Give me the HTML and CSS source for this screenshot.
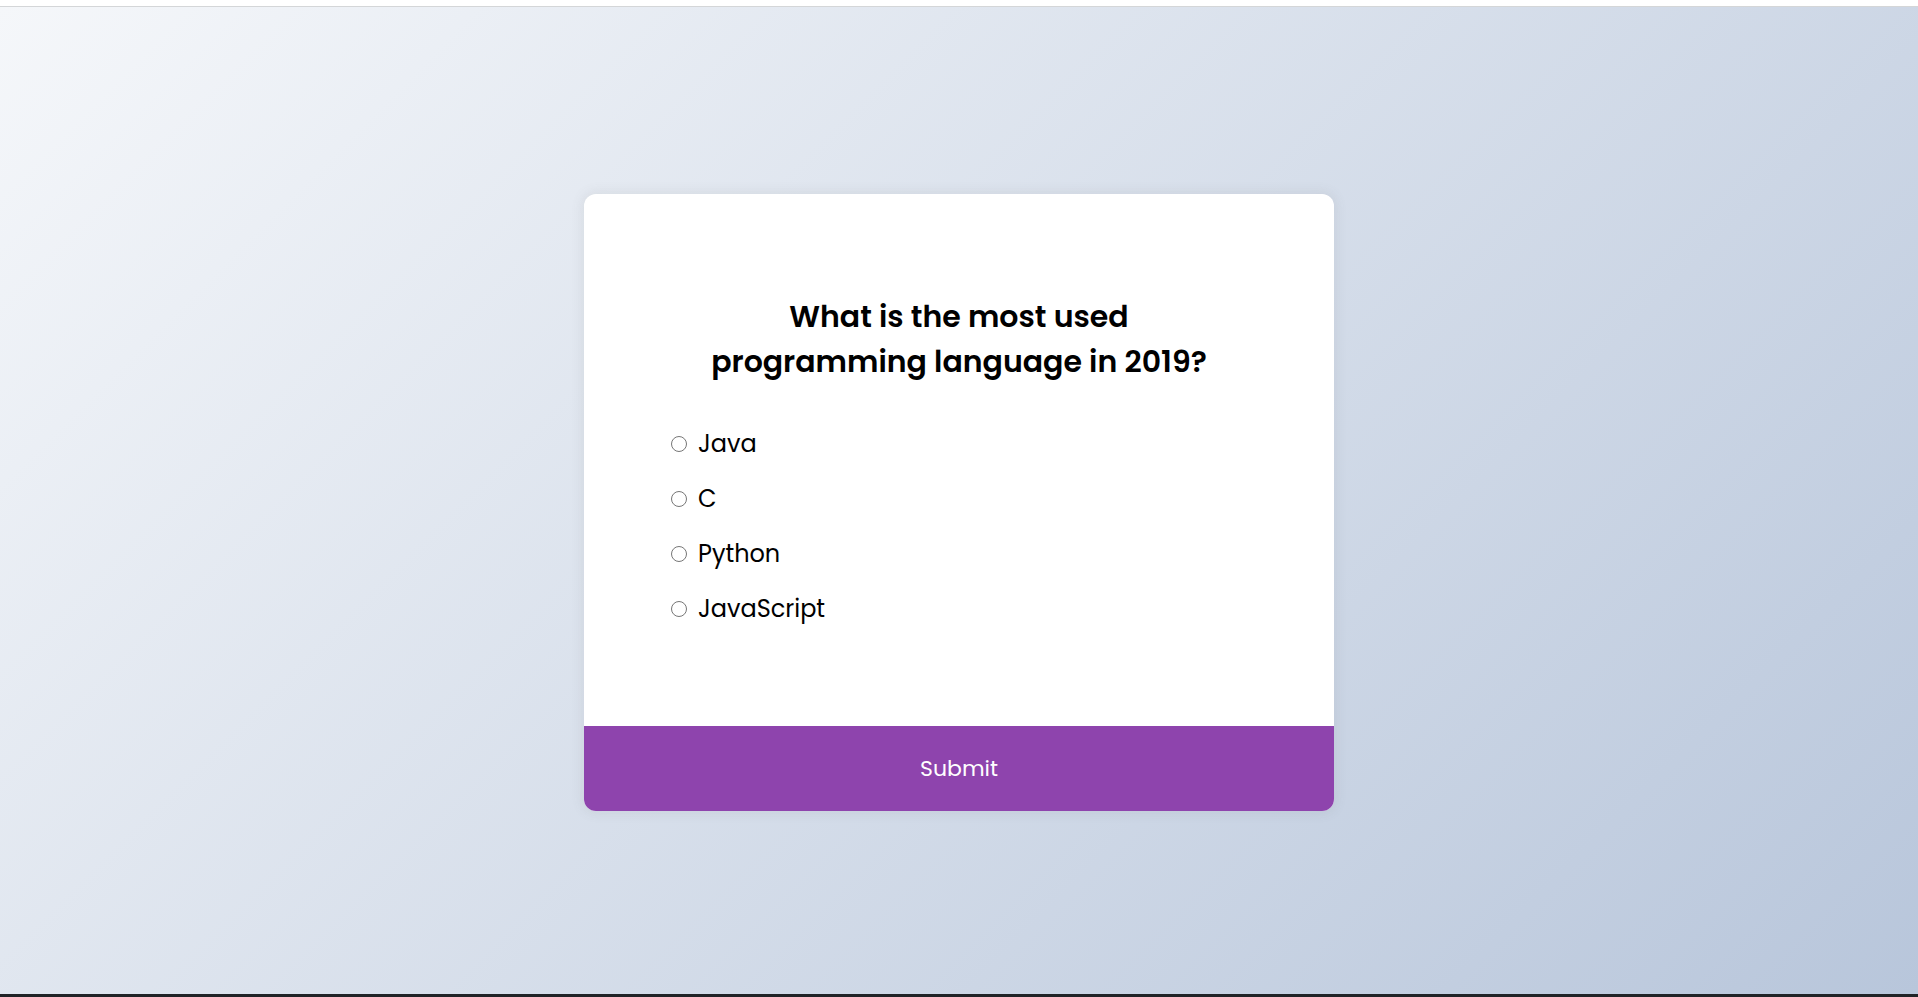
FILE: index.html
```html
<!DOCTYPE html>
<html lang="en">
<head>
<meta charset="UTF-8">
<title>Quiz App</title>
<link rel="stylesheet" href="styles.css">
</head>
<body>
<div class="topbar"></div>
<main class="stage">
  <div class="quiz-container">
    <div class="quiz-header">
      <h2 class="question">What is the most used programming language in 2019?</h2>
      <ul class="answers">
        <li class="answer-item">
          <input type="radio" name="answer" id="a" class="answer">
          <label for="a">Java</label>
        </li>
        <li class="answer-item">
          <input type="radio" name="answer" id="b" class="answer">
          <label for="b">C</label>
        </li>
        <li class="answer-item">
          <input type="radio" name="answer" id="c" class="answer">
          <label for="c">Python</label>
        </li>
        <li class="answer-item">
          <input type="radio" name="answer" id="d" class="answer">
          <label for="d">JavaScript</label>
        </li>
      </ul>
    </div>
    <button class="submit">Submit</button>
  </div>
</main>
<div class="bottombar"></div>
</body>
</html>
```

FILE: styles.css
```css
* { box-sizing: border-box; }

html, body { height: 100%; }

body {
  margin: 0;
  display: flex;
  flex-direction: column;
  overflow: hidden;
  font-family: "Poppins", "Liberation Sans", "Open Sans", sans-serif;
  color: #000;
}

.topbar {
  height: 7px;
  background: #fff;
  border-bottom: 1px solid #d4d6d8;
  flex: none;
}

.bottombar {
  height: 3px;
  background: #202327;
  flex: none;
}

.stage {
  flex: 1;
  display: flex;
  align-items: center;
  justify-content: center;
  padding-top: 4px;
  background-color: #b8c6db;
  background-image: linear-gradient(315deg, #b8c6db 0%, #f5f7fa 100%);
}

.quiz-container {
  background: #fff;
  border-radius: 12px;
  box-shadow: 0 0 12px 2px rgba(100, 100, 100, 0.1);
  width: 750px;
  overflow: hidden;
}

.quiz-header {
  padding: 80px;
}

.question {
  margin: 0;
  padding: 20px 40px;
  text-align: center;
  font-size: 30px;
  line-height: 45px;
  font-weight: 600;
}

.answers {
  list-style: none;
  padding: 0;
  margin: 22px 0 20px;
}

.answer-item {
  margin: 20px 0;
  font-size: 24px;
  line-height: 35px;
  height: 35px;
  display: flex;
  align-items: center;
}

.answer {
  width: 16px;
  height: 16px;
  margin: 1px 11px 0 7px;
  flex: none;
}

.submit {
  display: block;
  width: 100%;
  border: none;
  background: #8e44ad;
  color: #fff;
  font-family: inherit;
  font-size: 22px;
  line-height: 33px;
  padding: 26px;
  cursor: pointer;
}
```
